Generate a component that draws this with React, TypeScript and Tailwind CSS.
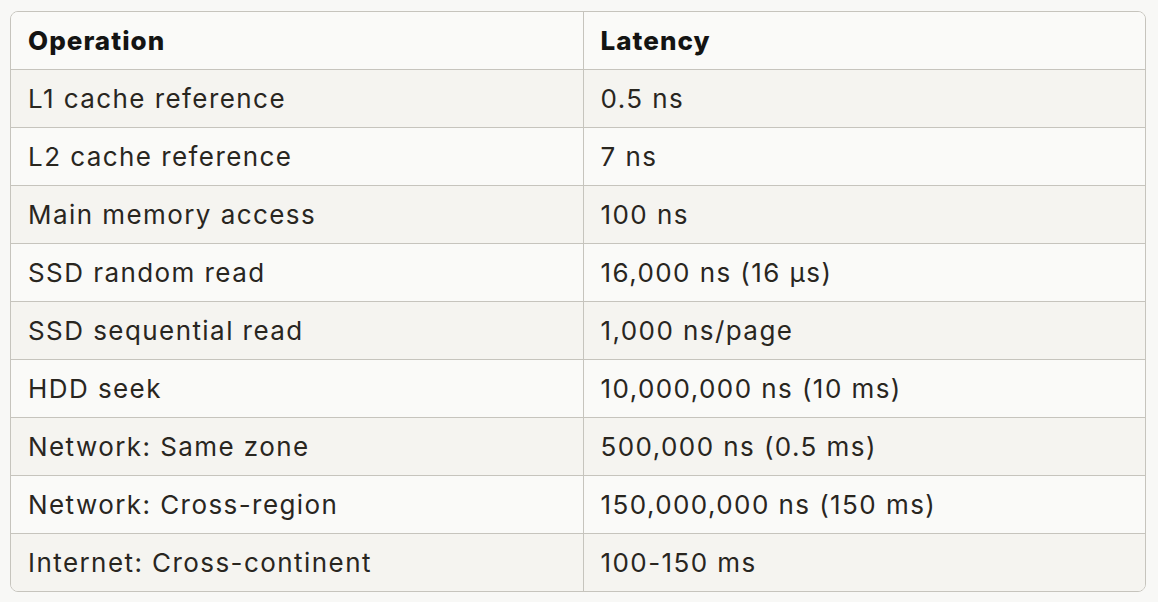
import React from 'react';

const ROWS: [string, string][] = [
  ['L1 cache reference', '0.5 ns'],
  ['L2 cache reference', '7 ns'],
  ['Main memory access', '100 ns'],
  ['SSD random read', '16,000 ns (16 µs)'],
  ['SSD sequential read', '1,000 ns/page'],
  ['HDD seek', '10,000,000 ns (10 ms)'],
  ['Network: Same zone', '500,000 ns (0.5 ms)'],
  ['Network: Cross-region', '150,000,000 ns (150 ms)'],
  ['Internet: Cross-continent', '100-150 ms'],
];

const App: React.FC = () => {
  return (
    <div
      className="min-h-screen bg-[#f8f8f6] pt-[11px] pl-[10px] pr-[12px]"
      style={{ fontFamily: 'Inter, "Noto Sans", sans-serif' }}
    >
      <div className="rounded-[8px] border border-[#c6c4bd] overflow-hidden bg-[#fafaf8]">
        <table className="w-full border-collapse text-[26px] tracking-[0.055em]">
          <thead>
            <tr className="h-[57px] bg-[#fafaf8]">
              <th className="w-[572px] text-left pl-[17px] font-extrabold tracking-[0.04em] text-[#141413] border-r border-[#c6c4bd]">
                Operation
              </th>
              <th className="text-left pl-[17px] font-extrabold tracking-[0.04em] text-[#141413]">Latency</th>
            </tr>
          </thead>
          <tbody>
            {ROWS.map(([op, lat], idx) => (
              <tr
                key={idx}
                className={`h-[58px] border-t border-[#c6c4bd] ${idx % 2 === 0 ? 'bg-[#f5f4f0]' : 'bg-[#fafaf8]'}`}
              >
                <td className="pl-[17px] text-[#29261f] border-r border-[#c6c4bd]">{op}</td>
                <td className="pl-[17px] text-[#29261f]">{lat}</td>
              </tr>
            ))}
          </tbody>
        </table>
      </div>
    </div>
  );
};

export default App;
